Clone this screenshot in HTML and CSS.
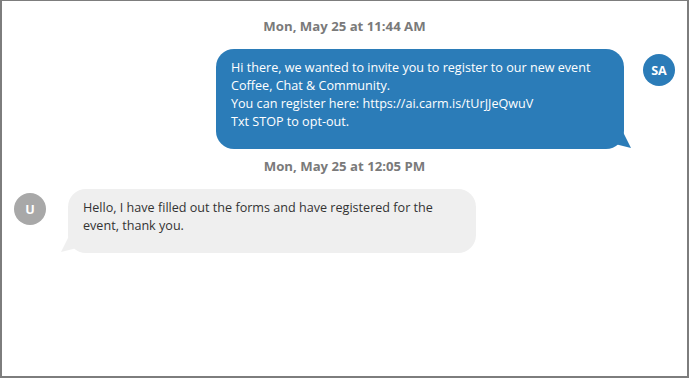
FILE: index.html
```html
<!DOCTYPE html>
<html>
<head>
<meta charset="utf-8">
<link rel="stylesheet" href="styles.css">
</head>
<body>
<div class="frame">
  <div class="stamp">Mon, May 25 at 11:44 AM</div>
  <div class="row row-out">
    <div class="bubble bubble-out">Hi there, we wanted to invite you to register to our new event<br>Coffee, Chat &amp; Community.<br>You can register here: https://ai.carm.is/tUrJJeQwuV<br>Txt STOP to opt-out.</div>
    <div class="avatar avatar-out">SA</div>
  </div>
  <div class="stamp">Mon, May 25 at 12:05 PM</div>
  <div class="row row-in">
    <div class="avatar avatar-in">U</div>
    <div class="bubble bubble-in">Hello, I have filled out the forms and have registered for the event, thank you.</div>
  </div>
</div>
</body>
</html>
```
FILE: styles.css
```css
html, body {
  margin: 0;
  padding: 0;
  background: #fff;
}
.frame {
  box-sizing: border-box;
  width: 689px;
  height: 378px;
  border: 2px solid #7d7d7d;
  border-top: 1px solid #7d7d7d;
  padding-top: 16px;
  font-family: "Open Sans", "Liberation Sans", sans-serif;
  font-size: 12.6px;
}
.stamp {
  text-align: center;
  font-weight: 700;
  font-size: 13.2px;
  color: #7a7a7a;
  line-height: 18px;
  margin-bottom: 14px;
}
.row {
  display: flex;
  align-items: flex-start;
  margin-bottom: 8px;
}
.row-out {
  justify-content: flex-end;
  padding-right: 12px;
}
.row-in {
  padding-left: 12px;
}
.bubble {
  position: relative;
  box-sizing: border-box;
  width: 408px;
  padding: 10px 15px 18px;
  line-height: 18px;
  border-radius: 18px;
}
.bubble-out {
  background: #2b7cb8;
  color: #fff;
}
.bubble-out::after {
  content: "";
  position: absolute;
  right: -7px;
  bottom: 1px;
  width: 16px;
  height: 16px;
  background: #2b7cb8;
  clip-path: polygon(0 0, 50% 0, 100% 100%, 0 75%);
}
.bubble-in {
  background: #efefef;
  color: #333;
  margin-left: 22px;
}
.bubble-in::after {
  content: "";
  position: absolute;
  left: -7px;
  bottom: 1px;
  width: 16px;
  height: 16px;
  background: #efefef;
  clip-path: polygon(50% 0, 100% 0, 100% 75%, 0 100%);
}
.avatar {
  flex: none;
  width: 32px;
  height: 32px;
  margin-top: 5px;
  border-radius: 50%;
  color: #fff;
  font-weight: 700;
  font-size: 12.6px;
  display: flex;
  align-items: center;
  justify-content: center;
}
.avatar-out {
  background: #2b7cb8;
  margin-left: 19px;
}
.avatar-in {
  background: #a8a8a8;
  margin-top: 4px;
}
```
